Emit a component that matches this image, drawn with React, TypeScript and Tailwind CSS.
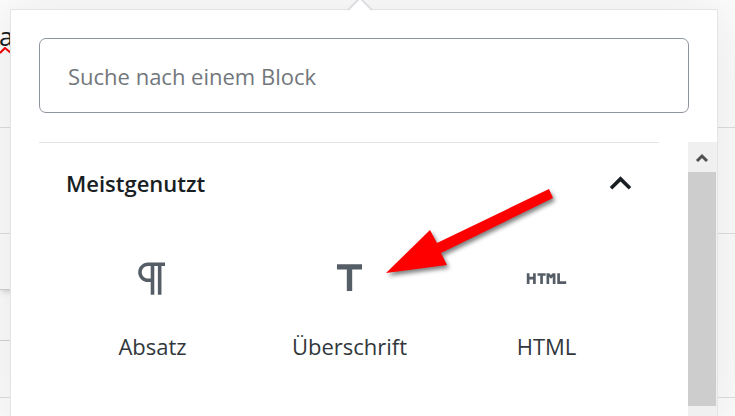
import React from 'react';

type BlockItem = { label: string; path: string };

const blocks: BlockItem[] = [
  {
    label: 'Absatz',
    path: 'M11 5v7H9.5C7.6 12 6 10.4 6 8.5S7.6 5 9.5 5H11m8-2H9.5C6.5 3 4 5.5 4 8.5S6.5 14 9.5 14H11v7h2V5h2v16h2V5h2V3z',
  },
  { label: 'Überschrift', path: 'M5 4v3h5.5v12h3V7H19V4z' },
  {
    label: 'HTML',
    path: 'M4.5 11h-2V9H1v6h1.5v-2.5h2V15H6V9H4.5v2zM7 10.5h1.5V15H10v-4.5h1.5V9H7v1.5zM14.5 10l-1-1H12v6h1.5v-3.9l1 1 1-1V15H17V9h-1.5l-1 1zM19.5 13.5V9H18v6h5v-1.5h-3.5z',
  },
];

function Icon({ path }: { path: string }) {
  return (
    <svg viewBox="0 0 24 24" className="size-[43px] shrink-0" fill="currentColor" aria-hidden="true">
      <path d={path} />
    </svg>
  );
}

function EditorPage() {
  return (
    <div className="col-start-1 row-start-1 flex min-w-0 flex-col">
      <div className="h-32 border-b border-[#dcdddf] pt-4">
        <p className="-ml-px text-[26px] leading-10 font-medium text-[#191e23]">a</p>
        <svg width="12" height="7" className="-mt-[9px]" aria-hidden="true">
          <path d="M0 6 L5 1 L11 6" fill="none" stroke="#f00000" strokeWidth="2" />
        </svg>
      </div>
      <div className="h-[106px] border-b border-[#dcdddf]" />
      <div className="flex h-[164px] flex-col border-b border-[#dcdddf]">
        <div className="h-14 w-1/2 border-b border-[#d0d1d3] shadow-md" />
        <div className="h-[51px] w-1/2 border-b border-[#d0d1d3]" />
      </div>
    </div>
  );
}

function Scrollbar() {
  return (
    <div className="flex w-[29px] shrink-0 flex-col bg-[#f0f0f0] pr-px" aria-hidden="true">
      <div className="flex h-[30px] items-center justify-center">
        <svg width="14" height="12" viewBox="0 0 14 12">
          <path d="M2 10l5-5 5 5" fill="none" stroke="#505050" strokeWidth="3" />
        </svg>
      </div>
      <div className="h-[234px] bg-[#cdcdcd]" />
    </div>
  );
}

function PointerArrow() {
  return (
    <svg
      width="176"
      height="96"
      viewBox="0 0 176 96"
      className="pointer-events-none absolute top-[41px] left-[343px]"
      aria-hidden="true"
    >
      <polygon
        points="4,89 48,46 55,59 167,5 171,14 59,69 65,81"
        fill="#ff0000"
        className="drop-shadow-[2px_3px_2px_rgba(0,0,0,0.5)]"
      />
    </svg>
  );
}

function Inserter() {
  return (
    <div className="relative col-start-1 row-start-1 mt-[9px] mr-[17px] ml-[10px] flex flex-col border border-b-0 border-[#e2e4e7] bg-white shadow-[0_5px_54px_rgba(25,30,35,0.1)]">
      <svg width="28" height="12" viewBox="0 0 28 12" className="absolute -top-[11px] left-[335px]" aria-hidden="true">
        <path d="M2 12 L14 -1 L26 12z" fill="#ffffff" />
        <path d="M2 11 L14 -1 L26 11" fill="none" stroke="#dcdee2" strokeWidth="2" />
      </svg>
      <div className="p-7">
        <input
          type="search"
          aria-label="Suche nach einem Block"
          placeholder="Suche nach einem Block"
          className="h-[75px] w-full rounded-[7px] border border-[#8d96a0] bg-white px-7 text-[22px] text-[#32373c] placeholder:text-[#72777c]"
        />
      </div>
      <div className="flex flex-1 pt-px pl-7">
        <section className="relative mr-[29px] min-w-0 flex-1 border-t border-[#e2e4e7]">
          <h2>
            <button
              type="button"
              aria-expanded="true"
              className="flex h-20 w-full items-center justify-between pr-[17px] pl-[27px] text-left text-[22px] font-semibold text-[#191e23]"
            >
              Meistgenutzt
              <Icon path="M12 8l-6 6 1.41 1.41L12 10.83l4.59 4.58L18 14l-6-6z" />
            </button>
          </h2>
          <ul className="grid grid-cols-3 pr-[14px] pl-[15px]">
            {blocks.map((block) => (
              <li key={block.label}>
                <button
                  type="button"
                  className="flex w-full flex-col items-center gap-[30px] pt-[34px] text-[22px] leading-8 text-[#32373c]"
                >
                  <span className="text-[#555d66]">
                    <Icon path={block.path} />
                  </span>
                  {block.label}
                </button>
              </li>
            ))}
          </ul>
          <PointerArrow />
        </section>
        <Scrollbar />
      </div>
    </div>
  );
}

export default function App() {
  return (
    <main className="grid min-h-screen overflow-hidden bg-[#fcfcfc] font-['Open_Sans','Noto_Sans',sans-serif]">
      <EditorPage />
      <Inserter />
    </main>
  );
}
